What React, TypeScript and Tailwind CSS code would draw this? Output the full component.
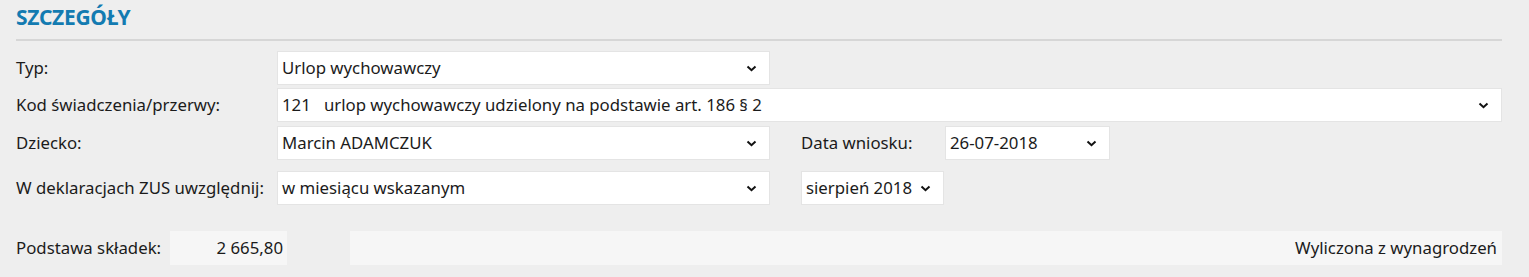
function Chevron() {
  return (
    <svg width="11" height="7" viewBox="0 0 11 7" className="shrink-0">
      <polyline points="1.5,1.5 5.5,5.2 9.5,1.5" fill="none" stroke="#111" strokeWidth="2" />
    </svg>
  );
}

function Select({ value, className }: { value: string; className: string }) {
  return (
    <div className={`flex items-center justify-between h-[34px] bg-white border border-[#e4e4e4] pl-[4px] pr-[12px] ${className}`}>
      <span className="whitespace-pre">{value}</span>
      <Chevron />
    </div>
  );
}

export default function App() {
  return (
    <div className="w-[1529px] h-[277px] bg-[#eeeeee] pl-4 pr-[27px] pt-[2px] text-[16.8px] text-[#1b1b1b] font-['Noto_Sans','Open_Sans',sans-serif]">
      <h1 className="text-[21px] font-bold text-[#137bb1] leading-[30px] tracking-[-0.3px]">SZCZEGÓŁY</h1>
      <div className="h-[2px] bg-[#d6d6d6] mt-[7px]" />

      <div className="flex flex-col mt-[10px]">
        <div className="flex items-center">
          <span className="w-[261px]">Typ:</span>
          <Select value="Urlop wychowawczy" className="w-[493px]" />
        </div>
        <div className="flex items-center mt-[3px]">
          <span className="w-[261px]">Kod świadczenia/przerwy:</span>
          <Select value="121   urlop wychowawczy udzielony na podstawie art. 186 § 2" className="flex-1" />
        </div>
        <div className="flex items-center mt-[4px]">
          <span className="w-[261px]">Dziecko:</span>
          <Select value="Marcin ADAMCZUK" className="w-[493px]" />
          <span className="ml-[31px] w-[144px]">Data wniosku:</span>
          <Select value="26-07-2018" className="w-[165px]" />
        </div>
        <div className="flex items-center mt-[11px]">
          <span className="w-[261px]">W deklaracjach ZUS uwzględnij:</span>
          <Select value="w miesiącu wskazanym" className="w-[493px]" />
          <Select value="sierpień 2018" className="ml-[31px] w-[143px] pr-[8px]" />
        </div>
        <div className="flex items-center mt-[26px]">
          <span className="w-[154px]">Podstawa składek:</span>
          <div className="w-[117px] h-[34px] bg-[#f6f6f6] flex items-center justify-end pr-[4px]">2 665,80</div>
          <div className="flex-1 ml-[63px] h-[34px] bg-[#f6f6f6] flex items-center justify-end pr-[5px]">Wyliczona z wynagrodzeń</div>
        </div>
      </div>
    </div>
  );
}
